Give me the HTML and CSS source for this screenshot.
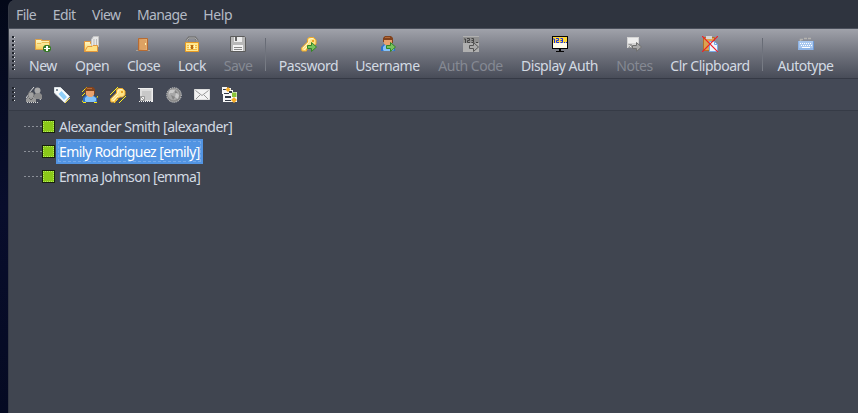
FILE: index.html
```html
<!DOCTYPE html>
<html lang="en">
<head>
<meta charset="utf-8">
<title>Accounts</title>
<link rel="stylesheet" href="styles.css">
</head>
<body>
<svg class="defs">
  <defs>
    <linearGradient id="gold" x2="0" y2="1"><stop stop-color="#fff8c8"/><stop offset="1" stop-color="#f5cf58"/></linearGradient>
    <linearGradient id="door" x2="1"><stop stop-color="#d39459"/><stop offset="1" stop-color="#e7b276"/></linearGradient>
    <g id="arrow"><path d="M6.500 9.500h4v-3l5 4.500-5 4.500v-3h-4z"/></g>
    <g id="key">
      <path d="M8 1.500h4.500L15 4v4l-2.500 2H10l-1.500 1H7v2H5.500v2H1L.5 12l6-6V3z" fill="#ffe385" stroke="#eea928"/>
      <path d="M2 12l6-6V4l2-1.500h2M3 14l5-5" fill="none" stroke="#fff6c8"/>
      <path d="M11 4h2v2h-2z" fill="#e9a526"/>
    </g>
    <g id="person">
      <path d="M1 15v-4l3-3h7l4 3v4z" fill="#2f72c9"/>
      <path d="M3 14v-3l2-2h6l3 2v3l-2 1H4z" fill="#83c2fa"/>
      <path d="M4 3h8v5l-2 2H7L4 8z" fill="#e9a26e"/>
      <path d="M3 6V2l2-2h6l2 2v5h-1V4H4v2z" fill="#82421c"/>
      <path d="M5 1h5v1H5z" fill="#b26a39"/>
    </g>
  </defs>
</svg>
<div class="window">
  <nav class="menu"><span>File</span><span>Edit</span><span>View</span><span>Manage</span><span>Help</span></nav>
  <div class="toolbar">
    <i class="grip"></i>
    <div class="tool"><svg viewBox="0 0 16 16"><path d="M.5 3.500h6v1h8v9H.5z" fill="url(#gold)" stroke="#dda044"/><path d="M2 7.500h4l1-1h7" fill="none" stroke="#e9bd52"/><path d="M10 9h4l2 2v3l-2 2h-4l-2-2v-3z" fill="#397c28"/><path d="M11 10h2v2h2v1h-2v2h-2v-2H9v-1h2z" fill="#fff"/></svg><span>New</span></div>
    <div class="tool"><svg viewBox="0 0 16 16"><path d="M.5 5.500h6v2h7v8H.5z" fill="url(#gold)" stroke="#e5983a"/><path d="M7.500 3.500l2-3h5v10h-7z" fill="#e8e8e8" stroke="#c4c4c4"/><path d="M10 3v6M12.500 3v6" stroke="#bbb"/><path d="M1 15l2.500-4.500H8l1-1h4.500v6H1z" fill="#ffe184" stroke="#e5983a"/></svg><span>Open</span></div>
    <div class="tool"><svg viewBox="0 0 16 16"><path d="M0 14h14v1H0z" fill="#a6a098"/><path d="M2.500 2.500h9v12h-9z" fill="url(#door)" stroke="#b76b31"/><path d="M4 4h6v9H4z" fill="#dda263"/><path d="M9 7h1v2H9z" fill="#fff0a8"/></svg><span>Close</span></div>
    <div class="tool"><svg viewBox="0 0 16 16"><path d="M3 8V4l2-2.500h6L13 4v4" fill="none" stroke="#777" stroke-width="2.500"/><path d="M3 7V4l2-2h6l2 2v3" fill="none" stroke="#aaa"/><path d="M1.500 6.500h13v9h-13z" fill="#ffe78d" stroke="#e99b23"/><path d="M3 9.500h10M3 11.500h10M3 13.500h10" stroke="#efb846"/><path d="M7 9h2v4H7z" fill="#b86c14"/><path d="M5 9h1v4H5zM10 9h1v4h-1z" fill="#fff5c2"/></svg><span>Lock</span></div>
    <div class="tool off"><svg viewBox="0 0 16 16"><path d="M.5.500h14l1 1v14H.5z" fill="#b8b8b8" stroke="#5c5c5c"/><path d="M4 1h8v5H4z" fill="#eee"/><path d="M5 1h2v4H5z" fill="#666"/><path d="M3 9h10v6H3z" fill="#f4f4f4"/><path d="M4 11.500h8M4 13.500h8" stroke="#888"/></svg><span>Save</span></div>
    <div class="tool after-sep"><svg viewBox="0 0 16 16"><use href="#key"/><use href="#arrow" fill="#78c35c" stroke="#348525"/></svg><span>Password</span></div>
    <div class="tool"><svg viewBox="0 0 16 16"><use href="#person"/><use href="#arrow" fill="#78c35c" stroke="#348525"/></svg><span>Username</span></div>
    <div class="tool off"><svg viewBox="0 0 16 16"><path d="M0 0h16v16H0z" fill="#b0b0b0"/><path d="M0 1h16v6H0z" fill="#909090"/><path d="M1 3h1.500v4M4 2.500h2.500v2H4.500v2H7M8.500 2.500h2v4h-2m0-2h2M13 6.500h2" fill="none" stroke="#444"/><use href="#arrow" fill="#aaa" stroke="#555"/></svg><span>Auth Code</span></div>
    <div class="tool"><svg viewBox="0 0 16 16"><path d="M0 0h16v13H9v2h3v1H4v-1h3v-2H0z" fill="#050505"/><path d="M1 1h14v11H1z" fill="#fffbe9"/><path d="M1 1h14v6H1z" fill="#ffd83c"/><path d="M1 3h1.500v4M4 2.500h2.500v2H4.500v2H7M8.500 2.500h2v4h-2m0-2h2M12 6.500h1M14 6.500h1" fill="none" stroke="#1630ea"/></svg><span>Display Auth</span></div>
    <div class="tool off"><svg viewBox="0 0 16 16"><path d="M0 1h12v11H0z" fill="#d4d4d4"/><path d="M1 2h10v5H1z" fill="#eee"/><path d="M1.500 8.500h3v3h-3l3-3" fill="#eee" stroke="#999"/><use href="#arrow" x="-1" fill="#aaa" stroke="#707070"/></svg><span>Notes</span></div>
    <div class="tool"><svg viewBox="0 0 16 16"><path d="M1.500 1.500h11v13h-11z" fill="#dca250" stroke="#b67026"/><path d="M4 0h6v3H4z" fill="#d6d6d6"/><path d="M7.500 5.500h5l3 3v7h-8z" fill="#edf6ff" stroke="#79a9e5"/><path d="M12.500 5.500v3h3" fill="none" stroke="#79a9e5"/><path d="M0 0l16 16M16 0L0 16" stroke="#f11d26" stroke-width="1.200"/></svg><span>Clr Clipboard</span></div>
    <div class="tool after-sep"><svg viewBox="0 0 16 16"><path d="M2.500 5V3.500H5M6 2.500h3M10 2.500h3" fill="none" stroke="#b5b3af" stroke-width="1.500"/><path d="M0 5h16v9H0z" fill="#8fb4e5"/><path d="M1 5h14v7H1z" fill="#a8c7ef"/><path d="M2 7.500h12M3 9.500h11" stroke="#fff" stroke-dasharray="1 1"/><path d="M4 11.500h8" stroke="#fff"/><path d="M15 5h1v9h-1z" fill="#6f98d1"/></svg><span>Autotype</span></div>
  </div>
  <div class="filters">
    <i class="grip"></i>
    <svg viewBox="0 0 16 16"><path d="M3 6l5-6M0 11l3-4M14 13l2-4" stroke="#e0e0e0"/><circle cx="11.500" cy="3.500" r="3" fill="#a8a8a8"/><path d="M8 10V8l2-2h4l2 2v4H9z" fill="#8c8c8c"/><circle cx="5" cy="8" r="3" fill="#a2a2a2" stroke="#666" stroke-width=".6"/><path d="M0 15v-3l2-2h6l2 2v3z" fill="#999"/><path d="M3 11l2 2 2-2" fill="none" stroke="#646464"/><path d="M1 15.500h11" stroke="#d5d5d5" stroke-dasharray="1 1"/></svg>
    <svg viewBox="0 0 16 16"><path d="M.5.500h6l9 9-5 6L.5 6z" fill="#f9fbfc" stroke="#dce2e6"/><path d="M4.500 7l3-3 5.500 6-3 3z" fill="#8fcff8"/><path d="M2 2h2v2H2z" fill="#8294a0"/><path d="M11 16l5-5" stroke="#ffe646"/></svg>
    <svg viewBox="0 0 16 16"><path d="M0 5l5-5M0 9l4-4M0 15l3-4M12 15l4-6" stroke="#f9e711"/><use href="#person"/><path d="M1 15.500h3M12 15.500h3" stroke="#f9e711"/></svg>
    <svg viewBox="0 0 16 16"><path d="M0 8l8-8M4 16l4-4M9 16l7-7" stroke="#fff01d"/><use href="#key"/></svg>
    <svg viewBox="0 0 16 16"><path d="M2 2h12v12H2z" fill="#dcdcdc"/><path d="M4 4h9v9H4z" fill="#c8c8c8"/><path d="M2.500 9.500h4v4l-4-4v4h4" fill="#eee" stroke="#999"/><path d="M0 1.500h15M14.500 1v14" stroke="#eee"/><path d="M1 14.500h14" stroke="#f1f1f1" stroke-dasharray="1 1"/></svg>
    <svg viewBox="0 0 16 16"><circle cx="8" cy="8" r="7.300" fill="#888" stroke="#ddd" stroke-dasharray="1 1"/><circle cx="7.500" cy="7.500" r="5.800" fill="#a7a7a7"/><path d="M4 3h5l-2 3H4L3 8V5zm6 3l3 2-1 4-3-2z" fill="#c9c9c9"/><path d="M9 3l3 3H9zM5 8l4 2-2 3z" fill="#858585"/></svg>
    <svg viewBox="0 0 16 16"><path d="M.5 2.500h15v10H.5z" fill="#f3f3f3" stroke="#ddd"/><path d="M1.500 3.500L8 8.500l6.500-5M2 12l4-4M14 12l-4-4" fill="none" stroke="#999"/></svg>
    <svg viewBox="0 0 16 16"><path d="M0 0h5v1h4v2h2v2h4v10H1v-8H0z" fill="#f7f7f7"/><path d="M1 2h3v1H1zM7 4h3v2H7zM2 6h5v1H2zM3 9h6v2H3zM3 13h6v1H3z" fill="#333945"/><path d="M6 0l2.500 2.500L6 5 3.500 2.500zM12 10l3 3-3 3-3-3z" fill="#f8ad25"/><path d="M10 5.500h4.500V10H10z" fill="#8bc53b"/></svg>
  </div>
  <main class="tree">
    <div class="row"><i class="branch"></i><i class="box"></i><span>Alexander Smith [alexander]</span></div>
    <div class="row selected"><i class="branch"></i><i class="box"></i><span>Emily Rodriguez [emily]</span></div>
    <div class="row tight"><i class="branch"></i><i class="box"></i><span>Emma Johnson [emma]</span></div>
  </main>
</div>
</body>
</html>
```
FILE: styles.css
```css
* { box-sizing: border-box; }
body {
  margin: 0;
  height: 413px;
  padding-left: 8px;
  overflow: hidden;
  background: linear-gradient(#030818, #080d2c 50%, #050a22);
  color: #d3dae3;
  font: 14px/18px "Noto Sans", sans-serif;
  letter-spacing: -0.48px;
}
svg { width: 16px; height: 16px; flex: none; }
.defs { position: absolute; width: 0; height: 0; }
.window {
  height: 413px;
  border-left: 1px solid #353a45;
  border-radius: 7px 0 0 0;
  overflow: hidden;
  background: #404552;
}
.menu {
  height: 29px;
  display: flex;
  gap: 17px;
  padding: 6px 7px;
  background: #2f343f;
  border-bottom: 1px solid #4b505c;
  color: #b4bac5;
  letter-spacing: -0.7px;
}
.menu span:nth-child(-n+4) { letter-spacing: -0.55px; }
.menu span:nth-child(4) { letter-spacing: -0.65px; }
.menu span:last-child { letter-spacing: -0.35px; }
.menu { gap: 16.5px; }
.toolbar {
  height: 50px;
  display: grid;
  grid-template-columns: 0 28px 34px 33px 28px 28px 67px 65px 65px 77px 37px 78px 67px;
  column-gap: 18px;
  padding-left: 2px;
  background: linear-gradient(#a0a2aa, #70737d 50%, #484c58);
  border-bottom: 1px solid #353945;
}
.tool {
  display: flex;
  flex-direction: column;
  align-items: center;
  padding-top: 7px;
  gap: 5px;
  white-space: nowrap;
  letter-spacing: -0.48px;
}
.off { color: #858993; }
.grip {
  width: 3px;
  height: 35px;
  margin-top: 7px;
  background:
    repeating-linear-gradient(#20242c 0 2px, transparent 2px 4px) 0 0 / 2px 100% no-repeat,
    repeating-linear-gradient(transparent 0 1px, #eceef1 1px 2px, transparent 2px 4px) 1px 0 / 2px 100% no-repeat;
}
.toolbar .grip { margin-left: 1px; }
.after-sep { position: relative; padding-left: 10px; }
.after-sep::before {
  content: "";
  position: absolute;
  left: -5px;
  top: 9px;
  width: 1px;
  height: 33px;
  background: linear-gradient(#656973, #7b7f88);
}
.filters {
  height: 32px;
  display: flex;
  align-items: center;
  gap: 12px;
  padding-left: 3px;
  background: #444956;
  border-bottom: 1px solid #363b46;
}
.filters .grip { height: 15px; margin: 0 -1px 0 0; }
.tree { padding-top: 3px; background: #404550; height: 302px; }
.row { height: 25px; display: flex; align-items: center; padding-left: 15px; }
.branch { width: 18px; height: 1px; background: repeating-linear-gradient(90deg, #8b8f98 0 2px, transparent 2px 4px); }
.box { width: 13px; height: 13px; border: 1px solid #17200c; background: #8bc919; outline: 1px dotted #b4ee59; outline-offset: -2px; }
.row span { height: 25px; line-height: 26px; padding: 0 3px; margin-left: 1px; }
.selected span { background: #5294e2; color: #fff; outline: 1px dashed #76aaea; outline-offset: -3px; letter-spacing: -0.57px; }
.tight span { letter-spacing: -0.66px; }
```
